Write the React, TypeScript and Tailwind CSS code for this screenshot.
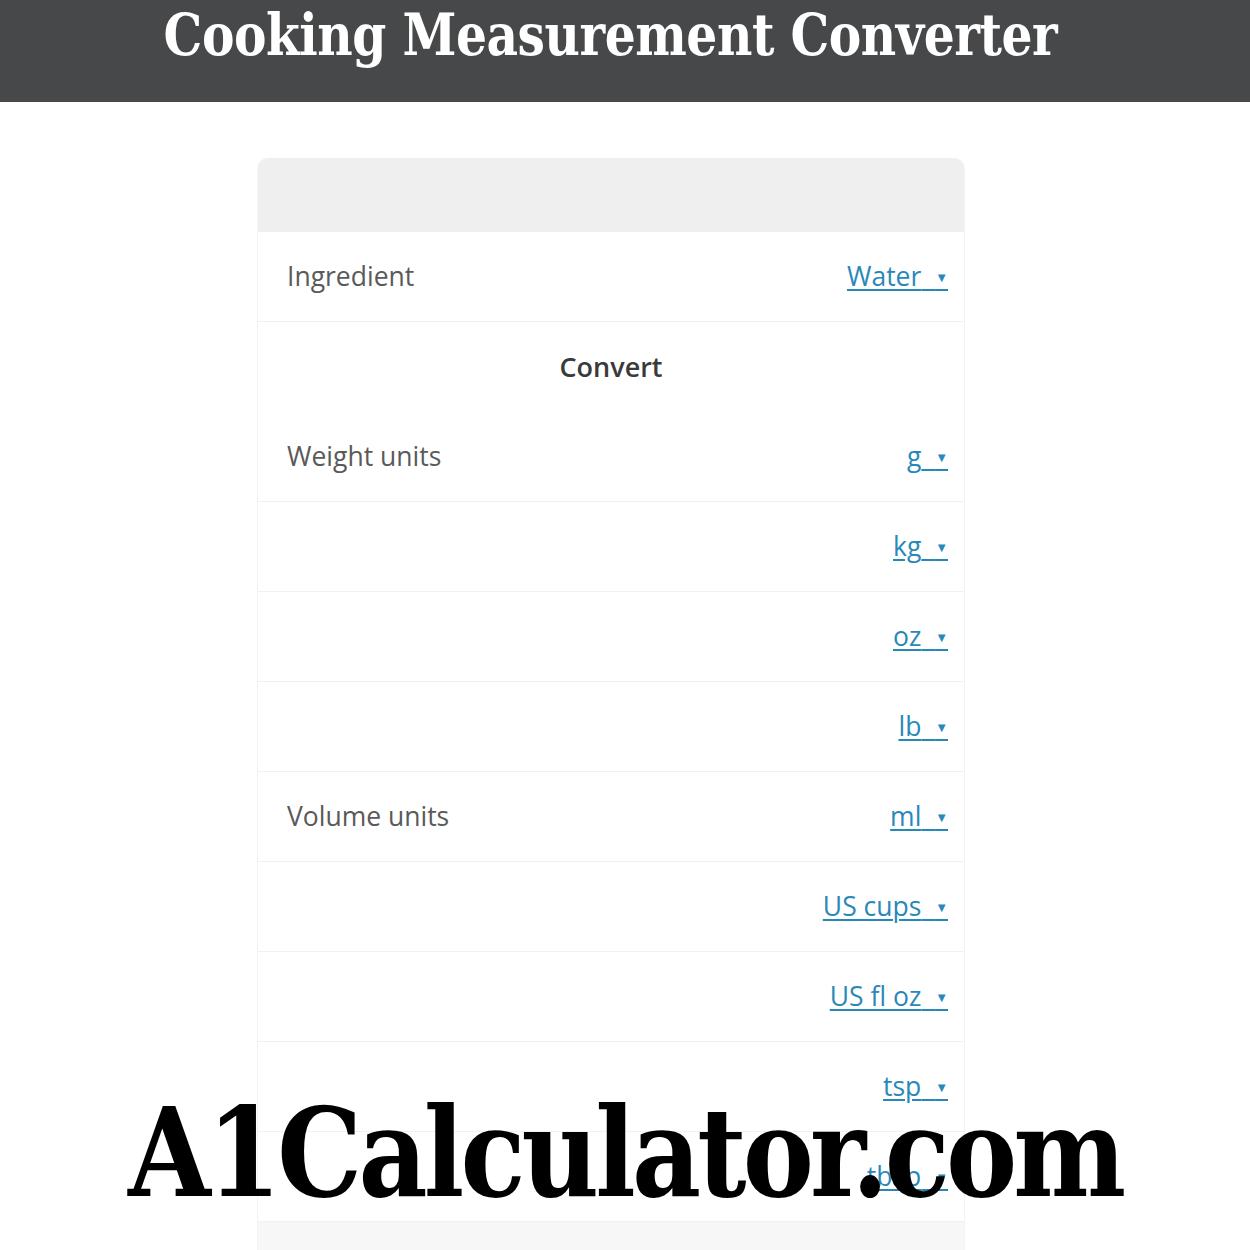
import React from "react";

const weightUnits = ["g", "kg", "oz", "lb"];
const volumeUnits = ["ml", "US cups", "US fl oz", "tsp", "tbsp"];

const UnitLink = ({ label }: { label: string }) => (
    <a
        href="#"
        className="text-[#2a88b9] underline decoration-2 underline-offset-[3px] whitespace-nowrap"
    >
        {label}&nbsp;&nbsp;
        <span className="text-[13px] align-[4px]">▼</span>
    </a>
);

const Row = ({ label, unit }: { label?: string; unit: string }) => (
    <div className="h-[90px] flex items-center justify-between pl-[29px] pr-[16px] border-b border-[#f1f1f1]">
        <span className="text-[#5a5a5a]">{label}</span>
        <UnitLink label={unit} />
    </div>
);

export default function App() {
    return (
        <div className="relative w-[1250px] h-[1250px] overflow-hidden bg-white font-['Open_Sans','Noto_Sans',sans-serif]">
            {/* Header */}
            <div className="h-[102px] bg-[#474849] w-full">
                <div className="w-[1220px] flex justify-center pt-[3px]">
                    <h1 className="inline-block scale-x-[0.934] font-['DejaVu_Serif',serif] font-stretch-condensed font-bold text-white text-[58px] leading-[64px] tracking-[-0.5px] whitespace-nowrap">
                        Cooking Measurement Converter
                    </h1>
                </div>
            </div>

            {/* Converter card */}
            <div className="w-[1222px] flex justify-center pt-[56px]">
                <div className="w-[708px] rounded-t-[10px] border-x border-[#f3f3f3] text-[26.5px]">
                    <div className="h-[74px] bg-[#efefef] rounded-t-[10px]" />
                    <Row label="Ingredient" unit="Water" />
                    <div className="h-[90px] flex items-center justify-center font-semibold text-[#3a3a3a] text-[27px]">
                        Convert
                    </div>
                    {weightUnits.map((u, i) => (
                        <Row key={u} label={i === 0 ? "Weight units" : undefined} unit={u} />
                    ))}
                    {volumeUnits.map((u, i) => (
                        <Row key={u} label={i === 0 ? "Volume units" : undefined} unit={u} />
                    ))}
                    <div className="h-[60px] bg-[#f7f7f7]" />
                </div>
            </div>

            {/* Site watermark */}
            <div className="absolute left-[128px] top-[1088px] origin-left scale-x-[0.956] font-['DejaVu_Serif',serif] font-stretch-condensed font-bold text-black text-[124px] leading-[130px] tracking-[-4px] whitespace-nowrap">
                A1Calculator.com
            </div>
        </div>
    );
}
